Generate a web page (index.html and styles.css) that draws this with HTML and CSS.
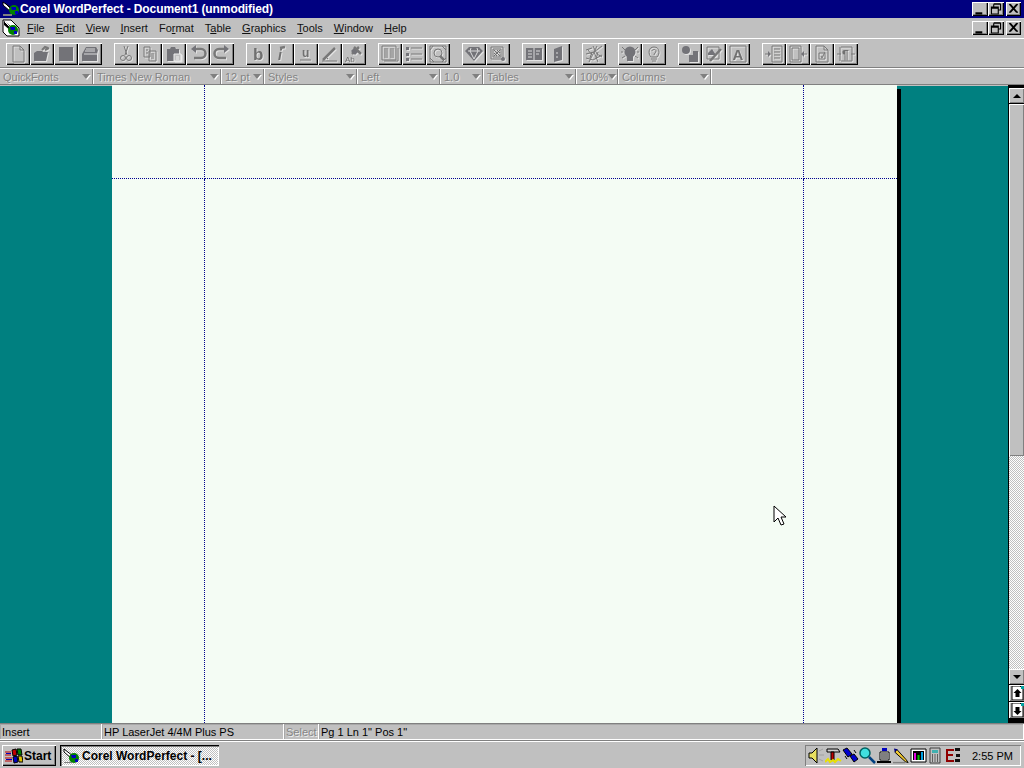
FILE: index.html
```html
<!DOCTYPE html>
<html>

<head>
	<title>Corel WordPerfect - Document1 (unmodified)</title>
	<link rel="stylesheet" href="styles.css">
</head>

<body>
	<div class="title-bar">
		<svg class="app-icon" viewBox="0 0 18 18"><path d="M1 2 L11 9 L9 12 L1 5Z" fill="#fff" stroke="#000"/><path d="M3 3l6 6" stroke="#000"/><circle cx="12" cy="10" r="5" fill="#008000"/><path d="M9 7h5v3h-4zM13 11h3v3h-3z" fill="#0000c0"/><path d="M1 14h9v2H1z" fill="#808080"/></svg>
		<span class="title-text">Corel WordPerfect - Document1 (unmodified)</span>
		<div class="win-btns">
			<div class="win-btn"><svg viewBox="0 0 14 12"><path d="M3 9h6v2H3z"/></svg></div>
			<div class="win-btn"><svg viewBox="0 0 14 12"><path d="M5 2h6v5H9M5 2v2M5 1.500h6M3 4.500h6v6H3zM3 5.500h6" fill="none" stroke="#000"/></svg></div>
			<div class="win-btn win-close"><svg viewBox="0 0 14 12"><path d="M3 2l7 8M4 2l7 8M10 2l-7 8M11 2l-7 8" stroke="#000" fill="none"/></svg></div>
		</div>
	</div>

	<div class="menu-bar">
		<svg class="app-icon" viewBox="0 0 18 18"><path d="M1 1h8l8 8v8H5l-4-4z" fill="#fff" stroke="#000"/><path d="M2 2l9 7-2 3-7-6z" fill="#000"/><path d="M3 3l6 6" stroke="#fff"/><circle cx="11" cy="11" r="5" fill="#008000"/><path d="M8 8h5v3H9zM12 12h3v3h-3z" fill="#0000c0"/></svg>
		<div class="menu-items">
			<span><u>F</u>ile</span>
			<span><u>E</u>dit</span>
			<span><u>V</u>iew</span>
			<span><u>I</u>nsert</span>
			<span>Fo<u>r</u>mat</span>
			<span>T<u>a</u>ble</span>
			<span><u>G</u>raphics</span>
			<span><u>T</u>ools</span>
			<span><u>W</u>indow</span>
			<span><u>H</u>elp</span>
		</div>
		<div class="win-btns">
			<div class="win-btn"><svg viewBox="0 0 14 12"><path d="M3 9h6v2H3z"/></svg></div>
			<div class="win-btn"><svg viewBox="0 0 14 12"><path d="M5 2h6v5H9M5 2v2M5 1.500h6M3 4.500h6v6H3zM3 5.500h6" fill="none" stroke="#000"/></svg></div>
			<div class="win-btn win-close"><svg viewBox="0 0 14 12"><path d="M3 2l7 8M4 2l7 8M10 2l-7 8M11 2l-7 8" stroke="#000" fill="none"/></svg></div>
		</div>
	</div>

	<div class="tool-bar">
		<div class="tool-group">
			<div class="tool"><svg viewBox="0 0 18 18"><path d="M4 1h7l4 4v12H4z M11 1v4h4"/></svg></div>
			<div class="tool"><svg viewBox="0 0 18 18"><path class="solid" d="M1 8l3-2h5l1 1h5l-2 9H1z"/><path d="M9 5l3-3 3 1M12 5l4-2" stroke-width="2"/></svg></div>
			<div class="tool"><svg viewBox="0 0 18 18"><rect class="solid" x="2" y="2" width="14" height="14"/></svg></div>
			<div class="tool"><svg viewBox="0 0 18 18"><path class="solid" d="M1 9l4-7h10l2 3-1 4v7H1z"/><path class="lite" d="M5 4h9M4 6h10M3 9h13"/></svg></div>
		</div>
		<div class="tool-group">
			<div class="tool"><svg viewBox="0 0 18 18"><path d="M7 1l3 9M11 1l-3 9"/><circle cx="6" cy="13" r="2.500"/><circle cx="12" cy="13" r="2.500"/></svg></div>
			<div class="tool"><svg viewBox="0 0 18 18"><path d="M3 2h6v10H3zM8 6h7v10H8zM5 5h2M5 8h2M10 9h3M10 11h3M10 13h3"/></svg></div>
			<div class="tool"><svg viewBox="0 0 18 18"><path class="solid" d="M2 4h3l1-2h4l1 2h3v12H2z"/><path class="page" d="M9 9h7v7H9zM11 12h3M11 14h3"/></svg></div>
			<div class="tool"><svg viewBox="0 0 18 18"><path class="thick" d="M7 4H12a3.500 3.500 0 0 1 0 9H5"/><path class="solid" d="M7 0v8L2 4z"/></svg></div>
			<div class="tool"><svg viewBox="0 0 18 18"><path class="thick" d="M11 4H6a3.500 3.500 0 0 0 0 9h7"/><path class="solid" d="M11 0v8l5-4z"/></svg></div>
		</div>
		<div class="tool-group">
			<div class="tool"><svg viewBox="0 0 18 18"><text x="4" y="15" class="glyph-b">b</text></svg></div>
			<div class="tool"><svg viewBox="0 0 18 18"><text x="5" y="15" class="glyph-i">i</text><path class="thick" d="M7 3l5-1"/></svg></div>
			<div class="tool"><svg viewBox="0 0 18 18"><text x="5" y="12" class="glyph-u">u</text><path d="M3 15h11"/></svg></div>
			<div class="tool"><svg viewBox="0 0 18 18"><path class="thick" d="M2 15L14 3"/><path d="M1 16h15M5 12l2 2"/></svg></div>
			<div class="tool"><svg viewBox="0 0 18 18"><path class="thick" d="M7 9l7-7M9 2l7 7"/><path class="solid" d="M6 6l3-3 4 4-3 3z"/><text x="0" y="17" class="glyph-ab">Ab</text></svg></div>
		</div>
		<div class="tool-group">
			<div class="tool"><svg viewBox="0 0 18 18"><path d="M1 1h14v14H1zM3 16h14V3M3 4h4M3 6h4M3 8h4M3 10h4M3 12h4M9 4h4M9 6h4M9 8h4M9 10h4M9 12h4"/></svg></div>
			<div class="tool"><svg viewBox="0 0 18 18"><path class="solid" d="M1 2h3v3H1zM1 8h3v3H1zM1 13h3v3H1z"/><path d="M6 3h11M6 9h11M6 14h11"/></svg></div>
			<div class="tool"><svg viewBox="0 0 18 18"><path d="M1 1h16v16H1zM1 5l3-4M13 1l4 4M1 13l4 4M13 17l4-4"/><circle cx="9" cy="8" r="4"/><path class="thick" d="M11 11l4 4"/></svg></div>
		</div>
		<div class="tool-group">
			<div class="tool"><svg viewBox="0 0 18 18"><path class="solid" d="M0 6l4-4h10l4 4-9 10z"/><path class="lite" d="M3 6h12M6 3l-1 3 4 8 4-8-1-3"/></svg></div>
			<div class="tool"><svg viewBox="0 0 18 18"><path d="M2 2h12v12H2zM4 4h8v8H4z"/><path class="hatch" d="M5 5l6 6M8 5l3 3M5 8l3 3M11 5l-6 6"/><circle class="solid" cx="14" cy="14" r="2"/></svg></div>
		</div>
		<div class="tool-group">
			<div class="tool"><svg viewBox="0 0 18 18"><path class="solid" d="M1 3h16v12H1z"/><path class="lite" d="M9 3v12M3 6h4M3 9h4M3 12h4M11 6h4M11 9h3"/></svg></div>
			<div class="tool"><svg viewBox="0 0 18 18"><path class="solid" d="M5 4l8-3v14l-8 2z"/><path class="lite" d="M8 7v2M8 11v2"/></svg></div>
		</div>
		<div class="tool-group">
			<div class="tool"><svg viewBox="0 0 18 18"><path d="M1 9l8-2 8-6M4 17l5-10 3-6M13 17L9 7M1 13l7 2 9-5M3 5l4 5M8 1l4 8 5 3M1 5l6-2M5 13l2-6M11 14l2-7"/></svg></div>
		</div>
		<div class="tool-group">
			<div class="tool"><svg viewBox="0 0 18 18"><circle class="solid" cx="9" cy="7" r="5.500"/><path class="solid" d="M6 11h6v5H6z"/><path d="M1 2l3 3M17 2l-3 3M1 13l3-2M17 13l-3-2M0 7h2M16 7h2"/></svg></div>
			<div class="tool"><svg viewBox="0 0 18 18"><path d="M6 12c-3-3-3-10 3-10s6 7 3 10zM6 14h6M7 16h4M7 6c0-2 4-2 4 0 0 2-2 2-2 4"/></svg></div>
		</div>
		<div class="tool-group">
			<div class="tool"><svg viewBox="0 0 18 18"><circle class="solid" cx="5" cy="5" r="4"/><path class="solid" d="M8 10h4V6h5v11H8z"/></svg></div>
			<div class="tool"><svg viewBox="0 0 18 18"><path d="M2 2h12v12H2z"/><path class="solid" d="M3 8l4-4 4 6H3z"/><path class="thick" d="M5 16L16 4"/></svg></div>
			<div class="tool"><svg viewBox="0 0 18 18"><path d="M1 1h16v16H1z"/><text x="3.500" y="15" class="glyph-a">A</text></svg></div>
		</div>
		<div class="tool-group">
			<div class="tool"><svg viewBox="0 0 18 18"><path d="M7 1h10v16H7zM9 4h6M9 7h6M9 10h6M9 13h6M0 9h5"/><path class="solid" d="M3 6l3 3-3 3z"/></svg></div>
			<div class="tool"><svg viewBox="0 0 18 18"><path d="M1 1h11v16H1zM3 3h7v12H3zM13 9h5"/><path class="solid" d="M15 6l-3 3 3 3z"/></svg></div>
			<div class="tool"><svg viewBox="0 0 18 18"><path d="M3 1h8l4 4v12H3zM11 1v4h4M6 8h6v6H6zM8 11l1 2 3-6"/></svg></div>
			<div class="tool"><svg viewBox="0 0 18 18"><path d="M4 2h11M4 16h11M0 9h4M14 9h4M3 2v14M15 2v14"/><text x="5" y="14" class="glyph-para">¶</text></svg></div>
		</div>
	</div>

	<div class="font-bar">
		<div class="combo combo-quick combo-first"><span>QuickFonts</span><i class="drop"></i></div>
		<div class="combo combo-font"><span>Times New Roman</span><i class="drop"></i></div>
		<div class="combo combo-size"><span>12 pt</span><i class="drop"></i></div>
		<div class="combo combo-quick"><span>Styles</span><i class="drop"></i></div>
		<div class="combo combo-left"><span>Left</span><i class="drop"></i></div>
		<div class="combo combo-size"><span>1.0</span><i class="drop"></i></div>
		<div class="combo combo-quick"><span>Tables</span><i class="drop"></i></div>
		<div class="combo combo-zoom"><span>100%</span><i class="drop"></i></div>
		<div class="combo combo-quick"><span>Columns</span><i class="drop"></i></div>
	</div>

	<div class="workspace">
		<div class="page">
			<div class="cell cell-r cell-b"></div>
			<div class="cell cell-r cell-b"></div>
			<div class="cell cell-b"></div>
			<div class="cell cell-r"></div>
			<div class="cell cell-r"></div>
			<div class="cell"></div>
		</div>
		<div class="page-shadow"></div>
		<div class="scroll">
			<div class="scroll-btn"><i class="arrow-up"></i></div>
			<div class="scroll-thumb"></div>
			<div class="scroll-track"></div>
			<div class="scroll-btn"><i class="arrow-down"></i></div>
			<div class="scroll-btn scroll-page"><svg viewBox="0 0 14 14"><path d="M2 0h8l3 3v11H2z" fill="#fff" stroke="#000"/><path d="M7.500 3l4 4H9.500v4h-4V7H3.500z"/><path d="M11 0h3v3h-3z" fill="#00a0a0"/></svg></div>
			<div class="scroll-btn scroll-page"><svg viewBox="0 0 14 14"><path d="M2 0h8l3 3v11H2z" fill="#fff" stroke="#000"/><path d="M7.500 12l-4-4h2V4h4v4h2z"/><path d="M11 0h3v3h-3z" fill="#00a0a0"/></svg></div>
		</div>
		<svg class="cursor" viewBox="0 0 13 21"><path d="M1 1v16l4-4 3 7 3-1-3-7h5z" fill="#fff" stroke="#000"/></svg>
	</div>

	<div class="status-bar">
		<div class="status status-insert">Insert</div>
		<div class="status status-printer">HP LaserJet 4/4M Plus PS</div>
		<div class="status status-select">Select</div>
		<div class="status status-pos">Pg 1 Ln 1" Pos 1"</div>
	</div>

	<div class="task-bar">
		<div class="start-btn">
			<svg viewBox="0 0 18 16"><path d="M7 2l4-1 1 6-4 1z" fill="#c00000" stroke="#000"/><path d="M12 1l4 0 1 6-4 0z" fill="#008000" stroke="#000"/><path d="M8 9l4-1 1 6-4 1z" fill="#0000c0" stroke="#000"/><path d="M13 8l4 0 1 6-4 0z" fill="#e0c000" stroke="#000"/><path d="M0 4h6M0 7h6M0 10h7M0 13h7" stroke="#c00000"/><path d="M1 5.500h5M1 11.500h6" stroke="#0000c0"/></svg>
			<span>Start</span>
		</div>
		<div class="task-btn">
			<svg viewBox="0 0 18 16"><path d="M1 1l9 7-2 2-7-6z" fill="#fff" stroke="#000"/><circle cx="11" cy="10" r="5" fill="#008000"/><path d="M8 7h5v3H9zM12 11h3v3h-3z" fill="#0000c0"/><path d="M1 14h8v1H1z" fill="#808080"/></svg>
			<span>Corel WordPerfect - [...</span>
		</div>
		<div class="tray">
			<svg viewBox="0 0 17 17"><path d="M1 6h3l5-5v15l-5-5H1z" fill="#e8e060" stroke="#000"/><path d="M11 8h5M11 4l4-2M11 12l4 2" stroke="#a0a0a0" fill="none"/></svg>
			<svg viewBox="0 0 17 17"><path d="M2 2h11l2 3H2z" fill="#d0d0d0" stroke="#000"/><path d="M6 5h3v8H6z" fill="#c00000" stroke="#000"/><path d="M0 15l3-3 2 3 3-2 2 2 3-3 3 2" stroke="#e8e000" stroke-width="2" fill="none"/></svg>
			<svg viewBox="0 0 17 17"><path d="M1 3l4-2 5 6-4 3zM8 9l4-2 4 5-4 3z" fill="#0000d0" stroke="#000"/><path d="M3 9l2 3M12 3l2 3" stroke="#000" fill="none"/></svg>
			<svg viewBox="0 0 17 17"><circle cx="6" cy="6" r="5" fill="#40e0e0" stroke="#006060" stroke-width="1.500"/><path d="M10 10l6 6" stroke="#004080" stroke-width="2.500"/></svg>
			<svg viewBox="0 0 17 17"><path d="M6 1h5v3H6z" fill="#0000c0"/><path d="M4 5h9v8H4z" fill="#fff" stroke="#000"/><path d="M5 7h7M5 9h7M5 11h7" stroke="#000"/><path d="M1 14h14v2H1z" fill="#000"/></svg>
			<svg viewBox="0 0 18 17"><path d="M4 2l10 11 2 3-3-1L2 5z" fill="#f0c830" stroke="#000"/><path d="M1 1l4 1-3 3z" fill="#000080"/><path d="M0 16h13" stroke="#808080" stroke-width="1.500"/></svg>
			<svg viewBox="0 0 17 17"><path d="M1 2h15v13H1z" fill="#fff" stroke="#000"/><path d="M3 4h11v9H3z" fill="#000"/><path d="M4 6h2v7H4z" fill="#e000e0"/><path d="M7.500 8h2v5h-2z" fill="#00c000"/><path d="M11 5h2v8h-2z" fill="#00a0e0"/></svg>
			<svg class="tray-calc" viewBox="0 0 12 17"><path d="M1 1h10v15H1z" fill="#c0c0c0" stroke="#404040"/><path d="M3 3h6v3H3z" fill="#40b0b0"/><path d="M3 8h1M5.500 8h1M8 8h1M3 10h1M5.500 10h1M8 10h1M3 12h1M5.500 12h1M8 12h1M3 14h1M5.500 14h1M8 14h1" stroke="#000"/></svg>
			<svg class="tray-e" viewBox="0 0 15 17"><path d="M1 2h8v2H3v3h5v2H3v4h6v2H1z" fill="#900000"/><path d="M10 1h5v3h-5zM11 7h4v3h-4zM10 12h5v3h-5z" fill="#101010"/></svg>
			<span class="clock">2:55 PM</span>
		</div>
	</div>
</body>

</html>
```
FILE: styles.css
```css
* {
	box-sizing: border-box;
}

html,
body {
	margin: 0;
	height: 768px;
	overflow: hidden;
}

body {
	display: flex;
	flex-direction: column;
	width: 1024px;
	background-color: #c0c0c0;
	color: #000;
	font-family: "Liberation Sans", Arial, sans-serif;
	font-size: 11px;
}

svg {
	display: block;
}

/* title and menu */
.title-bar {
	display: flex;
	align-items: center;
	height: 18px;
	background-color: #000080;
	color: #fff;
	font-size: 12px;
	font-weight: bold;
}

.app-icon {
	width: 18px;
	height: 18px;
	margin-left: 2px;
	flex: none;
}

.title-text {
	letter-spacing: -0.1px;
}

.win-btns {
	display: flex;
	margin-left: auto;
	padding-right: 3px;
}

.win-btn {
	width: 16px;
	height: 14px;
	background-color: #c0c0c0;
	box-shadow: inset 1px 1px 0 #fff, inset -1px -1px 0 #000, inset -2px -2px 0 #808080;
}

.win-close {
	width: 15px;
	margin-left: 2px;
}

.menu-bar {
	display: flex;
	align-items: center;
	height: 21px;
	border-bottom: 1px solid #fff;
	font-size: 11px;
}

.menu-items {
	display: flex;
	gap: 11px;
	margin-left: 7px;
	color: #111;
}

/* toolbar */
.tool-bar {
	display: flex;
	gap: 12px;
	height: 30px;
	padding: 4px 0 0 6px;
	border-bottom: 1px solid #fff;
	box-shadow: inset 0 -1px 0 #808080;
}

.tool-group {
	display: flex;
}

.tool {
	display: flex;
	align-items: center;
	justify-content: center;
	width: 24px;
	height: 22px;
	box-shadow: inset 1px 1px 0 #fff, inset -1px -1px 0 #000, inset -2px -2px 0 #808080;
}

.tool svg {
	width: 18px;
	height: 18px;
	fill: none;
	stroke: #787878;
	filter: drop-shadow(1px 1px 0 #e4e4e4);
}

.tool .solid {
	fill: #737378;
	stroke: none;
}

.tool .thick {
	stroke-width: 2.5;
}

.tool .lite {
	stroke: #dcdcdc;
}

.tool .page {
	fill: #c0c0c0;
	stroke: #eee;
}

.tool .hatch {
	stroke: #707070;
}

.tool text {
	fill: #707070;
	stroke: none;
}

.glyph-b,
.glyph-u,
.glyph-a,
.glyph-i {
	font-weight: bold;
}

.glyph-b {
	font-size: 17px;
}

.glyph-i {
	font-size: 14px;
	font-style: italic;
}

.glyph-u {
	font-size: 12px;
}

.glyph-a {
	font-size: 15px;
}

.glyph-ab {
	font-size: 8px;
}

.glyph-para {
	font-size: 12px;
	font-weight: bold;
}

/* font bar, everything greyed out */
.font-bar {
	display: flex;
	height: 16px;
	padding-left: 1px;
	border-bottom: 1px solid #808080;
	color: #848484;
	text-shadow: 1px 1px 0 #e8e8e8;
	font-size: 11px;
}

.combo {
	display: flex;
	align-items: center;
	justify-content: space-between;
	padding: 0 2px 0 3px;
	border-right: 1px solid #808080;
	box-shadow: 1px 0 0 #fff;
	margin-right: 1px;
}

.combo-first {
	padding-left: 2px;
}

.combo-quick {
	width: 92px;
}

.combo-font {
	width: 127px;
}

.combo-size {
	width: 42px;
}

.combo-left {
	width: 82px;
}

.combo-zoom {
	width: 41px;
}

.drop {
	width: 0;
	height: 0;
	border-style: solid;
	border-width: 5px 4px 0;
	border-color: #808080 transparent transparent;
	filter: drop-shadow(1px 1px 0 #fff);
}

/* document area */
.workspace {
	position: relative;
	display: flex;
	height: 638px;
	padding-left: 112px;
	background-color: #008080;
	box-shadow: inset 0 1px 0 #c0c0c0;
}

.page {
	display: grid;
	grid-template-columns: 93px 599px 1fr;
	grid-template-rows: 94px 1fr;
	width: 785px;
	background-color: #f4fcf4;
}

.cell-r {
	border-right: 1px dotted #000090;
}

.cell-b {
	border-bottom: 1px dotted #000090;
}

.page-shadow {
	width: 4px;
	margin-top: 4px;
	background-color: #000;
}

.scroll {
	display: flex;
	flex-direction: column;
	gap: 1px;
	width: 16px;
	margin-left: auto;
	padding: 3px 0 5px 1px;
	background-color: #000;
}

.scroll-btn {
	display: flex;
	align-items: center;
	justify-content: center;
	height: 15px;
	background-color: #c0c0c0;
	box-shadow: inset 1px 1px 0 #fff, inset -1px -1px 0 #808080;
}

.scroll-page {
	height: 16px;
}

.scroll-page svg {
	width: 14px;
	height: 14px;
}

.arrow-up,
.arrow-down {
	width: 0;
	height: 0;
	border-style: solid;
	border-color: transparent;
}

.arrow-up {
	border-width: 0 4px 4px;
	border-bottom-color: #000;
}

.arrow-down {
	border-width: 4px 4px 0;
	border-top-color: #000;
}

.scroll-thumb {
	height: 352px;
	margin-bottom: -1px;
	background-color: #c0c0c0;
	box-shadow: inset 1px 1px 0 #fff, inset -1px -1px 0 #808080;
}

.scroll-track {
	flex: 1;
	margin-bottom: -1px;
	background: repeating-conic-gradient(#c0c0c0 0 25%, #fff 0 50%) 0 0 / 2px 2px;
}

.cursor {
	position: absolute;
	left: 773px;
	top: 420px;
	width: 13px;
	height: 21px;
}

/* status bar */
.status-bar {
	display: flex;
	height: 17px;
	border-top: 1px solid #808080;
	font-size: 11px;
}

.status {
	display: flex;
	align-items: center;
	padding-left: 2px;
	box-shadow: inset -1px -1px 0 #fff, inset 0 0 0 1px #a8a8a8;
}

.status-insert {
	width: 102px;
}

.status-printer {
	width: 182px;
}

.status-select {
	width: 35px;
	color: #868686;
	text-shadow: 1px 1px 0 #eee;
}

.status-pos {
	flex: 1;
}

/* taskbar */
.task-bar {
	display: flex;
	align-items: flex-start;
	flex: 1;
	padding: 4px 3px 0 2px;
	border-top: 1px solid #808080;
	box-shadow: inset 0 1px 0 #fff;
	font-size: 12px;
	font-weight: bold;
}

.start-btn,
.task-btn {
	display: flex;
	align-items: center;
	height: 21px;
}

.start-btn {
	gap: 1px;
	width: 54px;
	padding-left: 3px;
	box-shadow: inset 1px 1px 0 #fff, inset -1px -1px 0 #000, inset -2px -2px 0 #808080;
}

.start-btn svg,
.task-btn svg {
	width: 18px;
	height: 16px;
	flex: none;
}

.task-btn {
	gap: 1px;
	width: 159px;
	margin-left: 4px;
	padding-left: 3px;
	background: repeating-conic-gradient(#c0c0c0 0 25%, #fff 0 50%) 0 0 / 2px 2px;
	box-shadow: inset 1px 1px 0 #000, inset 2px 2px 0 #808080, inset -1px -1px 0 #fff;
}

.tray {
	display: flex;
	align-items: center;
	width: 216px;
	height: 21px;
	margin-left: auto;
	padding-left: 3px;
	box-shadow: inset 1px 1px 0 #808080, inset -1px -1px 0 #fff;
	font-size: 11px;
	font-weight: normal;
}

.tray svg {
	width: 17px;
	height: 17px;
	flex: none;
}

.tray .tray-calc {
	width: 12px;
	margin-left: 2px;
}

.tray .tray-e {
	width: 15px;
	margin-left: 4px;
}

.clock {
	margin-left: 12px;
}
```
